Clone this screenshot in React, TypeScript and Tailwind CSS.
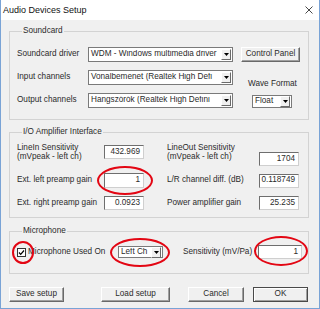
import React from 'react';

const FONT = { fontFamily: '"Liberation Sans", Arial, sans-serif' };

const Arrow: React.FC = () => (
  <span className="flex items-center justify-center w-[10px] h-[11px] mr-[1px] bg-[#f0f0f0] border-t border-l border-r border-b border-t-white border-l-white border-r-[#6a6a6a] border-b-[#6a6a6a] shrink-0">
    <svg width="5" height="3" viewBox="0 0 5 3">
      <path d="M0 0h5L2.5 3z" fill="#000" />
    </svg>
  </span>
);

interface SelectProps {
  value: string;
  className: string;
}

const Select: React.FC<SelectProps> = ({ value, className }) => (
  <div className={`flex items-center bg-white border border-[#7a7a7a] ${className}`}>
    <span className="flex-1 overflow-hidden whitespace-nowrap pl-[2px]">{value}</span>
    <Arrow />
  </div>
);

interface FieldProps {
  value: string;
  className: string;
}

const Field: React.FC<FieldProps> = ({ value, className }) => (
  <div className={`flex items-center justify-end bg-white border border-t-[#6e6e6e] border-l-[#6e6e6e] border-r-[#cfcfcf] border-b-[#cfcfcf] pr-[3px] shrink-0 ${className}`}>
    {value}
  </div>
);

interface ButtonProps {
  label: string;
  className: string;
  isDefault?: boolean;
}

const Btn: React.FC<ButtonProps> = ({ label, className, isDefault }) => (
  <div
    className={`flex items-center justify-center bg-[#f0f0f0] ${
      isDefault
        ? 'border border-[#4a4a4a] shadow-[inset_1px_1px_0_#fff,inset_-1px_-1px_0_#a0a0a0]'
        : 'border border-t-white border-l-white border-r-[#696969] border-b-[#696969] shadow-[inset_-1px_-1px_0_#a0a0a0]'
    } ${className}`}
  >
    {label}
  </div>
);

const Legend: React.FC<{ text: string }> = ({ text }) => (
  <legend className="ml-[5px] px-[1px] leading-[10px]">{text}</legend>
);

const Ring: React.FC<{ className: string }> = ({ className }) => (
  <div className={`absolute rounded-[50%] border-2 border-[#e30613] ${className}`} />
);

export default function App() {
  return (
    <div
      style={FONT}
      className="relative w-[320px] h-[309px] bg-[#f0f0f0] border-l border-r border-b border-[#79a3d6] text-[8.2px] leading-none text-[#2b2b2b] overflow-hidden"
    >
      {/* title bar */}
      <div className="flex items-center h-[20px] bg-white pl-[2px] pr-[6px]">
        <span className="text-[9px] flex-1 text-[#111]">Audio Devices Setup</span>
        <svg width="8" height="8" viewBox="0 0 8 8">
          <path d="M0.5 0.5l7 7M7.5 0.5l-7 7" stroke="#333" strokeWidth="0.9" />
        </svg>
      </div>

      <div className="pl-[8px]">
        {/* Soundcard */}
        <fieldset className="w-[300px] mt-[6px] border border-[#d3d3d3] pt-[11px] pb-[11px] pl-[7px]">
          <Legend text="Soundcard" />
          <div className="flex">
            <div className="flex flex-col gap-[8px]">
              <div className="flex items-center h-[15px]">
                <span className="w-[71px]">Soundcard driver</span>
                <Select value="WDM - Windows multimedia driver" className="w-[145px] h-[15px]" />
              </div>
              <div className="flex items-center h-[15px]">
                <span className="w-[71px]">Input channels</span>
                <Select value="Vonalbemenet (Realtek High Defi" className="w-[145px] h-[15px]" />
              </div>
              <div className="flex items-center h-[15px]">
                <span className="w-[71px]">Output channels</span>
                <Select value="Hangszórók (Realtek High Defini" className="w-[145px] h-[15px]" />
              </div>
            </div>
            <div className="flex flex-col ml-[8px]">
              <Btn label="Control Panel" className="w-[59px] h-[15px]" />
              <span className="ml-[7px] mt-[17px] leading-[10px] whitespace-nowrap">Wave Format</span>
              <Select value="Float" className="ml-[11px] mt-[6px] w-[40px] h-[13px]" />
            </div>
          </div>
        </fieldset>

        {/* I/O Amplifier Interface */}
        <fieldset className="w-[300px] mt-[7px] border border-[#d3d3d3] pt-[6px] pb-[7px] pl-[7px]">
          <Legend text="I/O Amplifier Interface" />
          <div className="flex h-[23px]">
            <div className="flex items-start w-[127px]">
              <span className="flex-1 leading-[9px]">
                LineIn Sensitivity
                <br />
                (mVpeak - left ch)
              </span>
              <Field value="432.969" className="w-[40px] h-[14px] mt-[2px]" />
            </div>
            <div className="flex items-start w-[132px] ml-[23px]">
              <span className="flex-1 leading-[9px]">
                LineOut Sensitivity
                <br />
                (mVpeak - left ch)
              </span>
              <Field value="1704" className="w-[40px] h-[14px] self-end" />
            </div>
          </div>
          <div className="flex h-[15px] mt-[7px]">
            <div className="flex items-center w-[127px]">
              <span className="flex-1">Ext. left preamp gain</span>
              <Field value="1" className="w-[40px] h-[15px]" />
            </div>
            <div className="flex items-center w-[132px] ml-[23px]">
              <span className="flex-1">L/R channel diff. (dB)</span>
              <Field value="0.118749" className="w-[40px] h-[14px]" />
            </div>
          </div>
          <div className="flex h-[14px] mt-[8px]">
            <div className="flex items-center w-[127px]">
              <span className="flex-1">Ext. right preamp gain</span>
              <Field value="0.0923" className="w-[40px] h-[14px]" />
            </div>
            <div className="flex items-center w-[132px] ml-[23px]">
              <span className="flex-1">Power amplifier gain</span>
              <Field value="25.235" className="w-[40px] h-[14px]" />
            </div>
          </div>
        </fieldset>

        {/* Microphone */}
        <fieldset className="w-[300px] mt-[8px] border border-[#d3d3d3] pt-[9px] pb-[14px] pl-[7px]">
          <Legend text="Microphone" />
          <div className="flex items-center h-[14px]">
            <span className="flex items-center justify-center w-[9px] h-[9px] bg-white border border-[#333] shrink-0">
              <svg width="7" height="7" viewBox="0 0 7 7">
                <path d="M1 3.5l1.7 1.8L6 1.5" stroke="#000" strokeWidth="1.2" fill="none" />
              </svg>
            </span>
            <span className="ml-[2px] w-[90px]">Microphone Used On</span>
            <Select value="Left Ch" className="w-[45px] h-[12px]" />
            <span className="ml-[20px] w-[75px]">Sensitivity (mV/Pa)</span>
            <Field value="1" className="w-[44px] h-[14px]" />
          </div>
        </fieldset>

        {/* buttons */}
        <div className="flex mt-[13px]">
          <Btn label="Save setup" className="w-[55px] h-[15px]" />
          <Btn label="Load setup" className="w-[69px] h-[15px] ml-[37px]" />
          <Btn label="Cancel" className="w-[56px] h-[15px] ml-[18px]" />
          <Btn label="OK" className="w-[55px] h-[15px] ml-[9px]" isDefault />
        </div>
      </div>

      {/* red annotation circles */}
      <Ring className="left-[96px] top-[166px] w-[56px] h-[29px]" />
      <Ring className="left-[11px] top-[241px] w-[22px] h-[23px]" />
      <Ring className="left-[109px] top-[238px] w-[60px] h-[29px]" />
      <Ring className="left-[253px] top-[236px] w-[54px] h-[30px]" />
    </div>
  );
}
